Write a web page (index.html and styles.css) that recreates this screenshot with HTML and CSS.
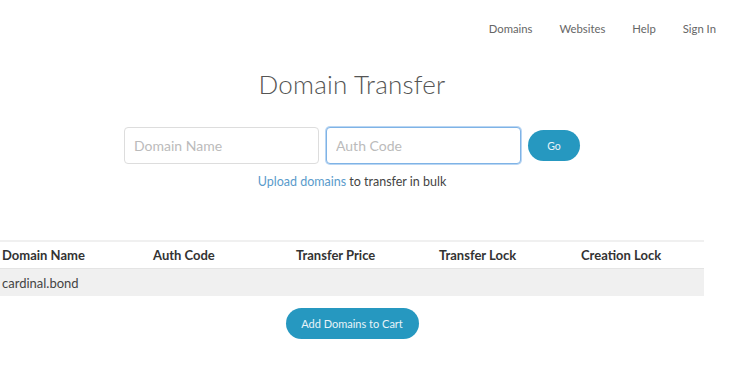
FILE: index.html
```html
<!DOCTYPE html>
<html lang="en">
<head>
    <meta charset="UTF-8">
    <title>Domain Transfer</title>
    <link rel="stylesheet" href="styles.css">
</head>
<body>
    <nav class="topnav">
        <a href="#">Domains</a>
        <a href="#">Websites</a>
        <a href="#">Help</a>
        <a href="#">Sign In</a>
    </nav>

    <main class="page">
        <div class="transfer">
            <h1>Domain Transfer</h1>
            <div class="form-row">
                <input type="text" class="field" placeholder="Domain Name">
                <input type="text" class="field focused" placeholder="Auth Code">
                <button class="go-btn">Go</button>
            </div>
            <p class="bulk"><a href="#">Upload domains</a> to transfer in bulk</p>
        </div>

        <div class="table">
            <div class="row head">
                <div>Domain Name</div>
                <div>Auth Code</div>
                <div>Transfer Price</div>
                <div>Transfer Lock</div>
                <div>Creation Lock</div>
            </div>
            <div class="row item">
                <div>cardinal.bond</div>
                <div></div>
                <div></div>
                <div></div>
                <div></div>
            </div>
        </div>

        <div class="cart">
            <button class="cart-btn">Add Domains to Cart</button>
        </div>
    </main>
</body>
</html>
```

FILE: styles.css
```css
* {
    margin: 0;
    padding: 0;
    box-sizing: border-box;
    font-family: 'Lato', 'Open Sans', sans-serif;
}
body {
    background: #fff;
    color: #444;
    width: 730px;
}
.topnav {
    display: flex;
    justify-content: flex-end;
    gap: 27px;
    padding: 22px 14px 0 0;
    height: 48px;
}
.topnav a {
    color: #666;
    font-size: 11.3px;
    text-decoration: none;
}
.page {
    width: 704px;
}
.transfer {
    text-align: center;
}
.transfer h1 {
    font-weight: 300;
    font-size: 26px;
    color: #555;
    margin-top: 20px;
    letter-spacing: 0.2px;
}
.form-row {
    display: flex;
    justify-content: center;
    align-items: center;
    gap: 7px;
    margin-top: 27px;
}
.field {
    width: 195px;
    height: 37px;
    border: 1px solid #ddd;
    border-radius: 4px;
    padding: 0 9px;
    font-size: 14px;
    color: #444;
    outline: none;
}
.field::placeholder {
    color: #bbb;
}
.field.focused {
    border: 1px solid #7fb3e6;
    box-shadow: 0 0 0 1px #b9d6f3;
}
.go-btn {
    width: 52px;
    height: 31px;
    border: none;
    border-radius: 16px;
    background: #2698c0;
    color: #e8f4f9;
    font-size: 10.5px;
}
.bulk {
    margin-top: 10px;
    font-size: 12.5px;
    color: #444;
}
.bulk a {
    color: #5a9bcb;
    text-decoration: none;
}
.table {
    margin-top: 51px;
    border-top: 2px solid #f0f0f0;
}
.row {
    display: grid;
    grid-template-columns: 151px 143px 143px 142px 125px;
    align-items: center;
    height: 27px;
    padding-left: 2px;
    font-size: 13px;
}
.row.head {
    font-weight: bold;
    color: #333;
    border-bottom: 1px solid #e4e4e4;
}
.row.item {
    background: #f0f0f0;
    color: #444;
}
.cart {
    display: flex;
    justify-content: center;
    margin-top: 12px;
}
.cart-btn {
    width: 133px;
    height: 31px;
    border: none;
    border-radius: 16px;
    background: #2698c0;
    color: #e8f4f9;
    font-size: 11px;
}
```
